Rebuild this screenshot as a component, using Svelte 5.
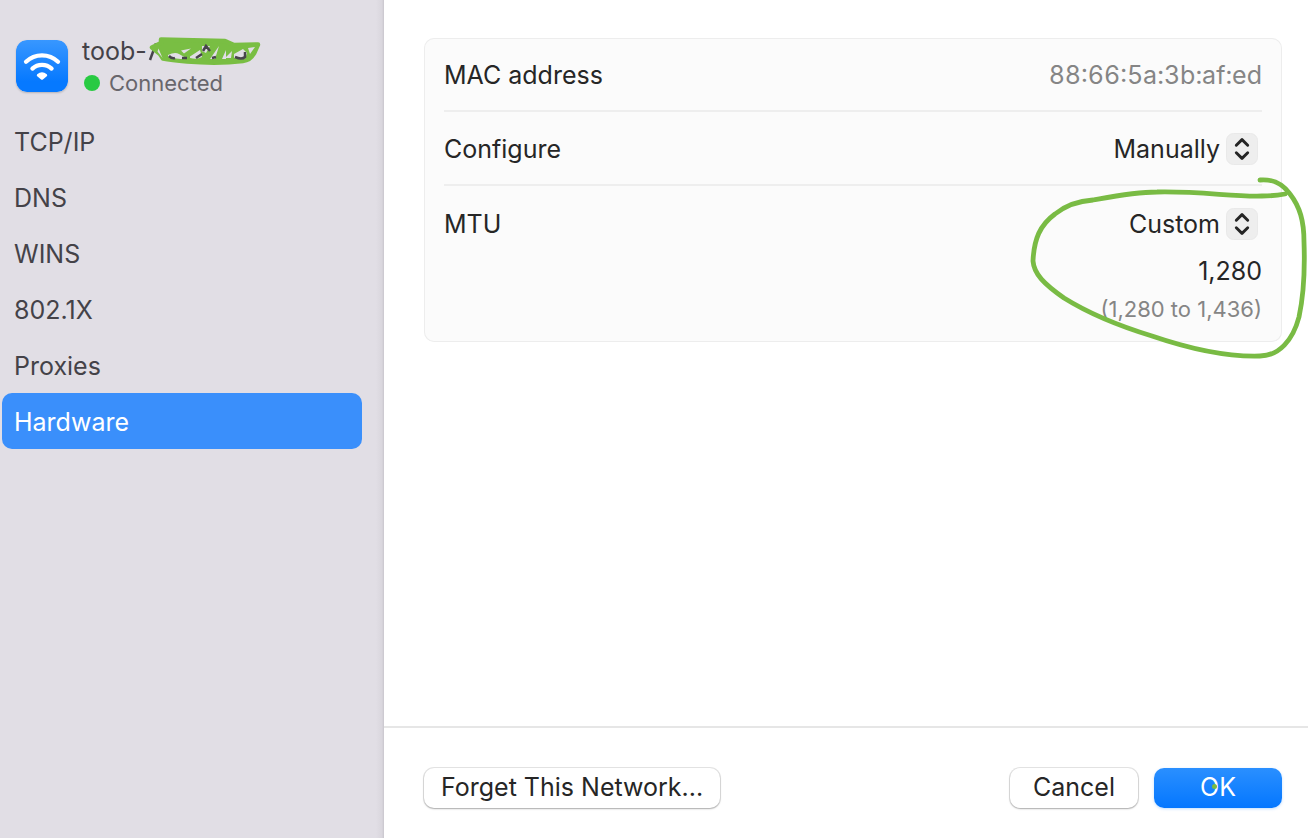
<script>
  const sections = ['TCP/IP', 'DNS', 'WINS', '802.1X', 'Proxies', 'Hardware'];
  let active = $state('Hardware');
  let configure = $state('Manually');
  let mtu = $state('Custom');
  let mtuValue = $state('1,280');
</script>

{#snippet chevrons()}
  <svg class="chevrons" viewBox="0 0 32 32" aria-hidden="true">
    <rect x="0.5" y="0.5" width="31" height="31" rx="7" fill="#eeeeee" stroke="#e9e9e9" />
    <path d="M10.3 12.2 16 6.6l5.7 5.6M10.3 19.8l5.7 5.6 5.7-5.6" fill="none" stroke="#242424" stroke-width="2.9" stroke-linecap="round" stroke-linejoin="round" />
  </svg>
{/snippet}

<div class="window">
  <aside class="sidebar">
    <header class="network">
      <svg class="wifi" viewBox="0 0 52 52" aria-hidden="true">
        <defs>
          <linearGradient id="wifi-fill" x1="0" y1="0" x2="0" y2="1">
            <stop offset="0" stop-color="#3897ff" />
            <stop offset="0.8" stop-color="#0679ff" />
          </linearGradient>
        </defs>
        <rect width="52" height="52" rx="11" fill="url(#wifi-fill)" />
        <g fill="none" stroke="#fff" stroke-width="4.2">
          <path d="M10 21.8a23 23 0 0 1 32 0" stroke-linecap="round" />
          <path d="M16.4 28.6a14 14 0 0 1 19.2 0" stroke-linecap="round" />
        </g>
        <path d="M21.2 34.3q4.8-4 9.6 0 1 1 0 1.9l-3.9 3.3q-.9.7-1.8 0l-3.9-3.3q-1-.9 0-1.9z" fill="#fff" />
      </svg>
      <div class="identity">
        <div class="name">
          toob-
          <svg class="scribble" viewBox="0 0 116 32" aria-hidden="true">
            <path d="M3 25 9 8.5" fill="none" stroke="#47454b" stroke-width="2.5" />
            <path d="M5 12.5 14 8V4.5L78 6l9 4 24-.5-4 9q-4 7-11 7.500-25 3-56 .5Q24 25 16 23.500L13 19z" fill="#79be43" stroke="#79be43" stroke-width="4.500" stroke-linejoin="round" />
            <g fill="#e1dee5">
              <path d="m11.500 13.500 4 9.500-5-6.500zM21 20q7-3.500 11-1l8 4.500q-11 1.500-19-2zM34 15.500l10-2-7 5zM43 21.500 53 15l2 7q-5 3-12 1zM55 11h8l-4 7-4-2zM72 11l-9 13h5zM79 15l-4 9h4zM85 16l-7 7h6zM87 19l9-5 4 4-2 6-11-1zM101 13l7-1-5 7z" />
            </g>
            <path d="M22 21q3 3 6 2M35 23h5M49 23l6-4M56 16l3-5 4 5M65 23l4-1M88 22q7 3 10 0v-5" fill="none" stroke="#47454b" stroke-width="2.500" />
          </svg>
        </div>
        <div class="status"><span class="dot"></span>Connected</div>
      </div>
    </header>
    <nav>
      {#each sections as section}
        <button class="item" class:active={active === section} onclick={() => (active = section)}>{section}</button>
      {/each}
    </nav>
  </aside>

  <div class="pane">
    <main>
      <section class="card">
        <div class="row">
          <span>MAC address</span>
          <span class="mac">88:66:5a:3b:af:ed</span>
        </div>
        <div class="row">
          <label for="configure">Configure</label>
          <div class="picker">
            <select id="configure" bind:value={configure}>
              <option>Manually</option>
              <option>Automatically</option>
            </select>
            {@render chevrons()}
          </div>
        </div>
        <div class="row tall">
          <label for="mtu">MTU</label>
          <div class="stack">
            <div class="picker">
              <select id="mtu" bind:value={mtu}>
                <option>Custom</option>
                <option>Standard</option>
              </select>
              {@render chevrons()}
            </div>
            <input class="value" aria-label="MTU" bind:value={mtuValue} />
            <div class="hint">(1,280 to 1,436)</div>
          </div>
        </div>
        <svg class="circle" viewBox="1020 170 288 200" aria-hidden="true">
          <path d="M1260 180C1273 179 1282 183 1290 194C1300 207 1304 221 1304 242C1305 270 1304 294 1299 317C1293 340 1279 356 1260 356C1227 357 1190 349 1152 336C1116 325 1088 313 1064 298C1044 284 1034 274 1033 261C1034 239 1040 225 1055 214C1065 206 1078 201 1093 200C1115 196 1135 192 1157 192C1200 191 1234 197 1262 196Q1274 196 1285 194" fill="none" stroke="#79bb44" stroke-width="4.8" stroke-linecap="round" stroke-linejoin="round" />
        </svg>
      </section>
    </main>
    <footer>
      <button class="push forget">Forget This Network...</button>
      <button class="push">Cancel</button>
      <button class="push primary">OK<span class="speck"></span></button>
    </footer>
  </div>
</div>

<style>
  :global(body) {
    margin: 0;
  }
  .window {
    display: flex;
    min-height: 100vh;
    background: #fff;
    color: #262626;
    font: 430 25px/32px Inter, sans-serif;
  }
  .window * {
    box-sizing: border-box;
  }
  button, select, input {
    margin: 0;
    padding: 0;
    border: 0;
    background: none;
    color: inherit;
    font: inherit;
  }
  .sidebar {
    flex: 0 0 384px;
    background: linear-gradient(to left, #c9c6cd 0, #d9d6dd 2px, #e1dee5 8px);
    color: #444248;
  }
  .network {
    display: flex;
    gap: 14px;
    padding: 35px 16px 14px;
  }
  .wifi {
    width: 52px;
    height: 52px;
    margin-top: 5px;
    border-radius: 11px;
    box-shadow: 0 1px 2px #0003;
  }
  .name {
    display: flex;
    align-items: center;
  }
  .scribble {
    width: 116px;
    height: 32px;
  }
  .status {
    display: flex;
    align-items: center;
    gap: 9px;
    padding-left: 2px;
    color: #68666c;
    font-size: 22px;
  }
  .dot {
    width: 16px;
    height: 16px;
    border-radius: 50%;
    background: #28ca42;
  }
  nav {
    display: flex;
    flex-direction: column;
    padding: 0 22px 0 2px;
  }
  .item {
    height: 56px;
    padding: 2px 12px 0;
    border-radius: 10px;
    text-align: left;
  }
  .active {
    background: #3a8ffb;
    color: #fff;
  }
  .pane {
    display: flex;
    flex: 1;
    flex-direction: column;
    min-width: 0;
  }
  main {
    flex: 1;
    padding: 38px 26px 38px 40px;
  }
  .card {
    position: relative;
    padding: 0 20px;
    border-radius: 10px;
    background: #fbfbfb;
    box-shadow: inset 0 0 0 1px #ededed;
  }
  .row {
    display: flex;
    align-items: center;
    justify-content: space-between;
    height: 74px;
    padding-top: 2px;
    border-bottom: 2px solid #eeeeee;
  }
  .tall {
    align-items: flex-start;
    height: auto;
    padding: 22px 0 21px;
    border-bottom: 0;
  }
  .mac {
    color: #858585;
    font-variant-numeric: tabular-nums;
  }
  .picker {
    position: relative;
    margin-right: 4px;
  }
  select {
    display: block;
    height: 32px;
    padding-right: 38px;
    appearance: none;
    field-sizing: content;
    text-align: right;
    outline: none;
  }
  .chevrons {
    position: absolute;
    top: 0;
    right: 0;
    width: 32px;
    height: 32px;
    pointer-events: none;
  }
  .stack {
    display: flex;
    flex-direction: column;
    align-items: flex-end;
  }
  .value {
    width: 160px;
    height: 36px;
    margin: 13px 0 8px;
    text-align: right;
    outline: none;
  }
  .hint {
    color: #858585;
    font-size: 22px;
    line-height: 24px;
  }
  .circle {
    position: absolute;
    top: 132px;
    right: -26px;
    width: 288px;
    height: 200px;
    pointer-events: none;
  }
  footer {
    display: flex;
    gap: 16px;
    padding: 40px 26px 30px 40px;
    border-top: 2px solid #e6e6e6;
  }
  .push {
    position: relative;
    min-width: 128px;
    height: 40px;
    padding: 0 16px 2px;
    border-radius: 10px;
    background: #fff;
    box-shadow: 0 0 0 1px #0000001a, 0 1px 2px #00000040;
  }
  .forget {
    margin-right: auto;
    padding: 0 17px 2px;
  }
  .primary {
    background: linear-gradient(#2a8fff, #0477ff);
    box-shadow: 0 1px 3px #007aff40;
    color: #fff;
  }
  .speck {
    position: absolute;
    top: 16px;
    left: 58px;
    width: 5px;
    height: 5px;
    border-radius: 50%;
    background: #79bb44;
  }
</style>
